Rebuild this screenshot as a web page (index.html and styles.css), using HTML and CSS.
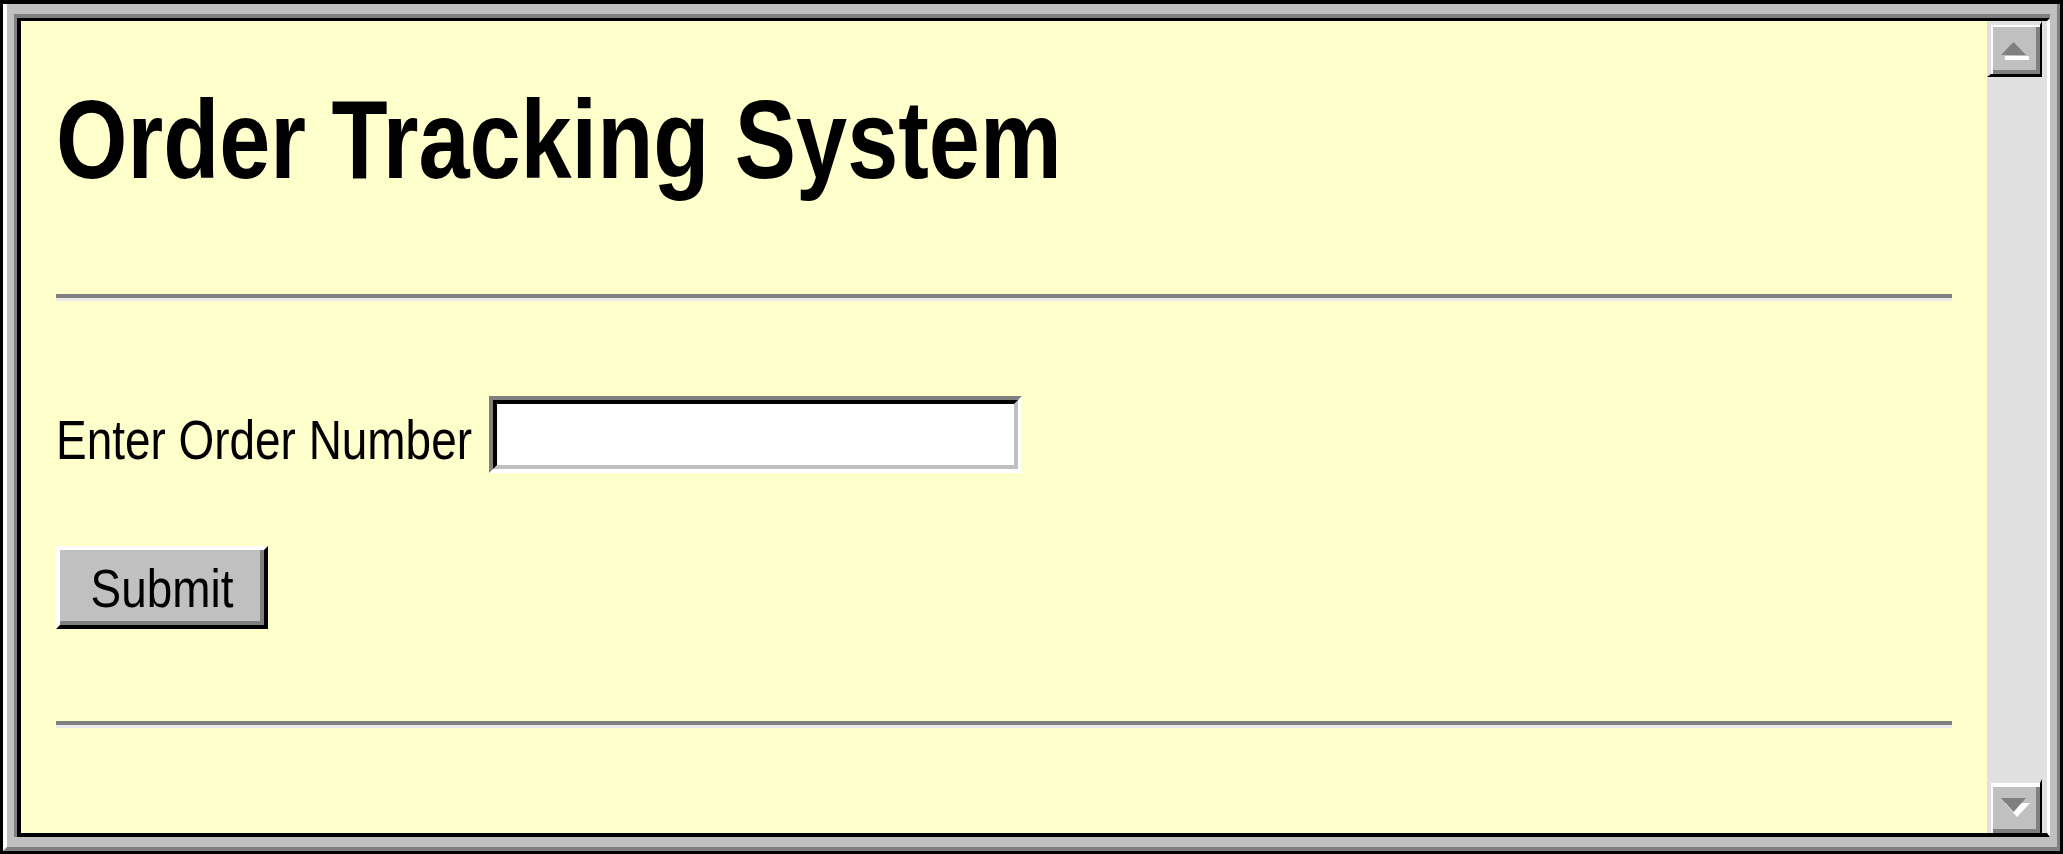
FILE: index.html
```html
<!DOCTYPE html>
<html lang="en">
<head>
<meta charset="utf-8">
<title>Order Tracking System</title>
<link rel="stylesheet" href="styles.css">
</head>
<body>
<div class="window">
  <div class="bevel">
    <div class="frame">
      <div class="frame-inner">
        <main class="content">
          <h1 class="title"><span class="narrow">Order Tracking System</span></h1>
          <hr class="rule rule-top">
          <form class="order-form">
            <div class="field-row">
              <label class="field-label" for="order"><span class="narrow">Enter Order Number</span></label>
              <span class="input-wrap"><input class="field-input" id="order" type="text"></span>
            </div>
            <button type="button" class="submit"><span class="narrow-btn">Submit</span></button>
          </form>
          <hr class="rule rule-bottom">
        </main>
        <div class="scrollbar">
          <div class="sb-btn sb-up">
            <svg class="sb-icon" width="49" height="49" viewBox="0 0 49 49">
              <rect x="14" y="31" width="24" height="4" fill="#ffffff"/>
              <polygon points="22.5,17 35,30 10,30" fill="#808080"/>
            </svg>
          </div>
          <div class="sb-btn sb-down">
            <svg class="sb-icon" width="49" height="46" viewBox="0 0 49 46">
              <polygon points="14,20 39,20 26,34" fill="#ffffff"/>
              <polygon points="10,15 35,15 22.5,29" fill="#808080"/>
            </svg>
          </div>
        </div>
      </div>
    </div>
  </div>
</div>
</body>
</html>
```

FILE: styles.css
```css
* {
  box-sizing: border-box;
}

html, body {
  margin: 0;
  padding: 0;
  width: 2063px;
  height: 854px;
  overflow: hidden;
  background: #c0c0c0;
}

.window {
  width: 2063px;
  height: 854px;
  border-style: solid;
  border-color: #000;
  border-width: 4px 3px 3px 3px;
}

.bevel {
  height: 100%;
  background: #c0c0c0;
  border-left: 4px solid #fff;
  border-right: 3px solid #808080;
  border-bottom: 4px solid #808080;
  padding: 10px 7px 10px 7px;
}

.frame {
  height: 100%;
  border-top: 4px solid #808080;
  border-left: 3px solid #808080;
}

.frame-inner {
  height: 100%;
  display: flex;
  border-top: 3px solid #000;
  border-left: 4px solid #000;
  border-right: 3px solid #fff;
  border-bottom: 4px solid #000;
}

.content {
  flex: 1;
  background: #ffffcc;
  padding: 63px 35px 0 35px;
  overflow: hidden;
  font-family: "Liberation Sans", Arial, sans-serif;
  color: #000;
}

.narrow {
  display: inline-block;
  transform: scaleX(0.82);
  transform-origin: 0 0;
  white-space: nowrap;
}

.title {
  margin: 0;
  font-size: 112px;
  line-height: 112px;
  font-weight: bold;
  white-space: nowrap;
}

.rule {
  margin: 0;
  height: 0;
  border: 0;
  border-top: 4px solid #808080;
  border-bottom: 3px solid #eaeaea;
}

.rule-top {
  margin-top: 98px;
}

.order-form {
  margin: 95px 0 0 0;
}

.field-row {
  display: flex;
  align-items: flex-start;
  height: 77px;
}

.field-label {
  display: block;
  width: 417px;
  flex: none;
  font-size: 56px;
  line-height: 56px;
  margin-top: 16px;
  white-space: nowrap;
}

.input-wrap {
  display: block;
  margin-left: 16px;
  width: 533px;
  height: 77px;
  border: 4px solid;
  border-color: #808080 #fff #fff #808080;
}

.field-input {
  display: block;
  width: 100%;
  height: 100%;
  margin: 0;
  padding: 0;
  border: 4px solid;
  border-color: #000 #c0c0c0 #c0c0c0 #000;
  background: #fff;
  outline: none;
}

.submit {
  display: block;
  margin-top: 73px;
  width: 212px;
  height: 83px;
  padding: 0;
  background: #c0c0c0;
  border-style: solid;
  border-width: 4px;
  border-color: #fff #000 #000 #fff;
  box-shadow: inset -4px -4px 0 #808080;
  font-family: "Liberation Sans", Arial, sans-serif;
  font-size: 54px;
  line-height: 1;
  color: #000;
}

.narrow-btn {
  display: inline-block;
  transform: scaleX(0.85);
  transform-origin: 50% 50%;
  white-space: nowrap;
}

.rule-bottom {
  margin-top: 92px;
}

.scrollbar {
  width: 60px;
  background: #e0e0e0;
  display: flex;
  flex-direction: column;
  justify-content: space-between;
}

.sb-btn {
  width: 55px;
  background: #c0c0c0;
  border-style: solid;
}

.sb-up {
  height: 56px;
  border-width: 4px 2px 3px 4px;
  border-color: #e0e0e0 #000 #000 #e0e0e0;
  box-shadow: inset 2px 2px 0 #fff, inset -4px -4px 0 #808080;
}

.sb-down {
  height: 54px;
  border-width: 4px 2px 0 4px;
  border-color: #e0e0e0 #000 #000 #e0e0e0;
  box-shadow: inset 2px 4px 0 #fff, inset -4px -4px 0 #808080;
}

.sb-icon {
  display: block;
}
```
